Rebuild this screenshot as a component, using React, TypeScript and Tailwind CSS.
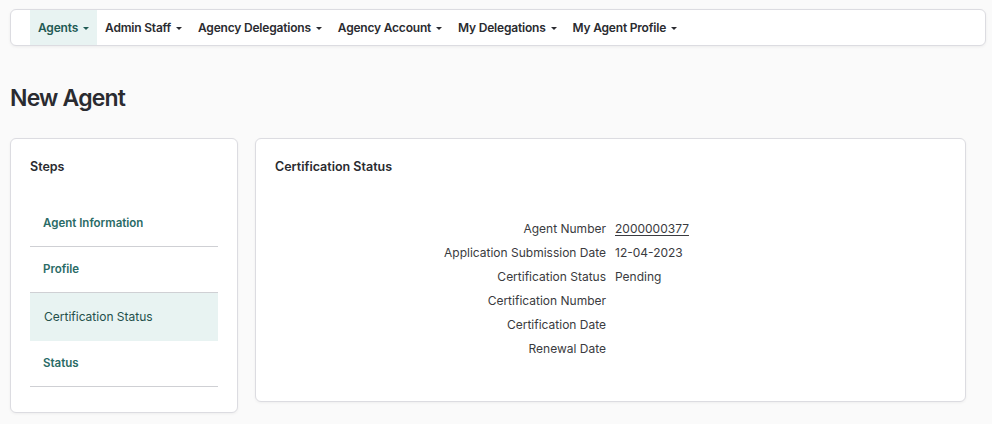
const navItems = ['Agents', 'Admin Staff', 'Agency Delegations', 'Agency Account', 'My Delegations', 'My Agent Profile']

const steps = [
  { label: 'Agent Information', active: false },
  { label: 'Profile', active: false },
  { label: 'Certification Status', active: true },
  { label: 'Status', active: false },
]

const rows: [string, string, boolean?][] = [
  ['Agent Number', '2000000377', true],
  ['Application Submission Date', '12-04-2023'],
  ['Certification Status', 'Pending'],
  ['Certification Number', ''],
  ['Certification Date', ''],
  ['Renewal Date', ''],
]

function Caret() {
  return <span className="inline-block w-0 h-0 border-x-[3px] border-t-[3px] border-x-transparent border-t-current mt-[2px]" />
}

export default function App() {
  return (
    <main className="min-h-screen bg-[#fafafa] pl-[10px] pr-[6px] pt-[9px] font-['Inter',sans-serif] text-[#2a2b30]">
      {/* Top navigation */}
      <nav className="h-[37px] flex items-stretch pl-[19px] bg-white border border-[#dcdce1] rounded-md shadow-[0_1px_3px_rgba(0,0,0,0.06)]">
        {navItems.map((item, i) => (
          <div
            key={item}
            className={`flex items-center gap-[5px] px-2 text-[12px] font-semibold tracking-[-0.2px] ${
              i === 0 ? 'bg-[#e8f3f2] text-[#1f5a54]' : 'text-[#2a2b30]'
            }`}
          >
            {item}
            <Caret />
          </div>
        ))}
      </nav>

      <h1 className="mt-[37px] text-[23px] font-semibold tracking-[-0.8px] leading-[30px]">New Agent</h1>

      <div className="mt-[25px] flex items-start gap-[17px]">
        {/* Steps */}
        <section className="w-[228px] h-[275px] bg-white border border-[#dcdce1] rounded-md shadow-[0_1px_3px_rgba(0,0,0,0.05)] px-[19px] pt-[19px]">
          <h2 className="text-[12.5px] font-semibold leading-[18px]">Steps</h2>
          <ul className="mt-[25px]">
            {steps.map((s) => (
              <li
                key={s.label}
                className={`h-[46px] flex items-center text-[11.5px] ${
                  s.active
                    ? 'bg-[#e8f3f2] text-[#24504b] font-normal pl-[14px] text-[12px] h-[48px]'
                    : 'text-[#2a6b66] font-semibold pl-[13px] border-b border-[#cfd0d4]'
                }`}
              >
                {s.label}
              </li>
            ))}
          </ul>
        </section>

        {/* Certification status */}
        <section className="w-[711px] h-[264px] bg-white border border-[#dcdce1] rounded-md shadow-[0_1px_3px_rgba(0,0,0,0.05)] px-[19px] pt-[19px]">
          <h2 className="text-[12.5px] font-semibold leading-[18px]">Certification Status</h2>
          <dl className="mt-[41px] grid grid-cols-2 gap-x-[9px] text-[12px] text-[#3a3b40] leading-[24px]">
            {rows.map(([label, value, link]) => (
              <div key={label} className="contents">
                <dt className="text-right">{label}</dt>
                <dd className={link ? 'underline underline-offset-2' : ''}>{value}</dd>
              </div>
            ))}
          </dl>
        </section>
      </div>
    </main>
  )
}
